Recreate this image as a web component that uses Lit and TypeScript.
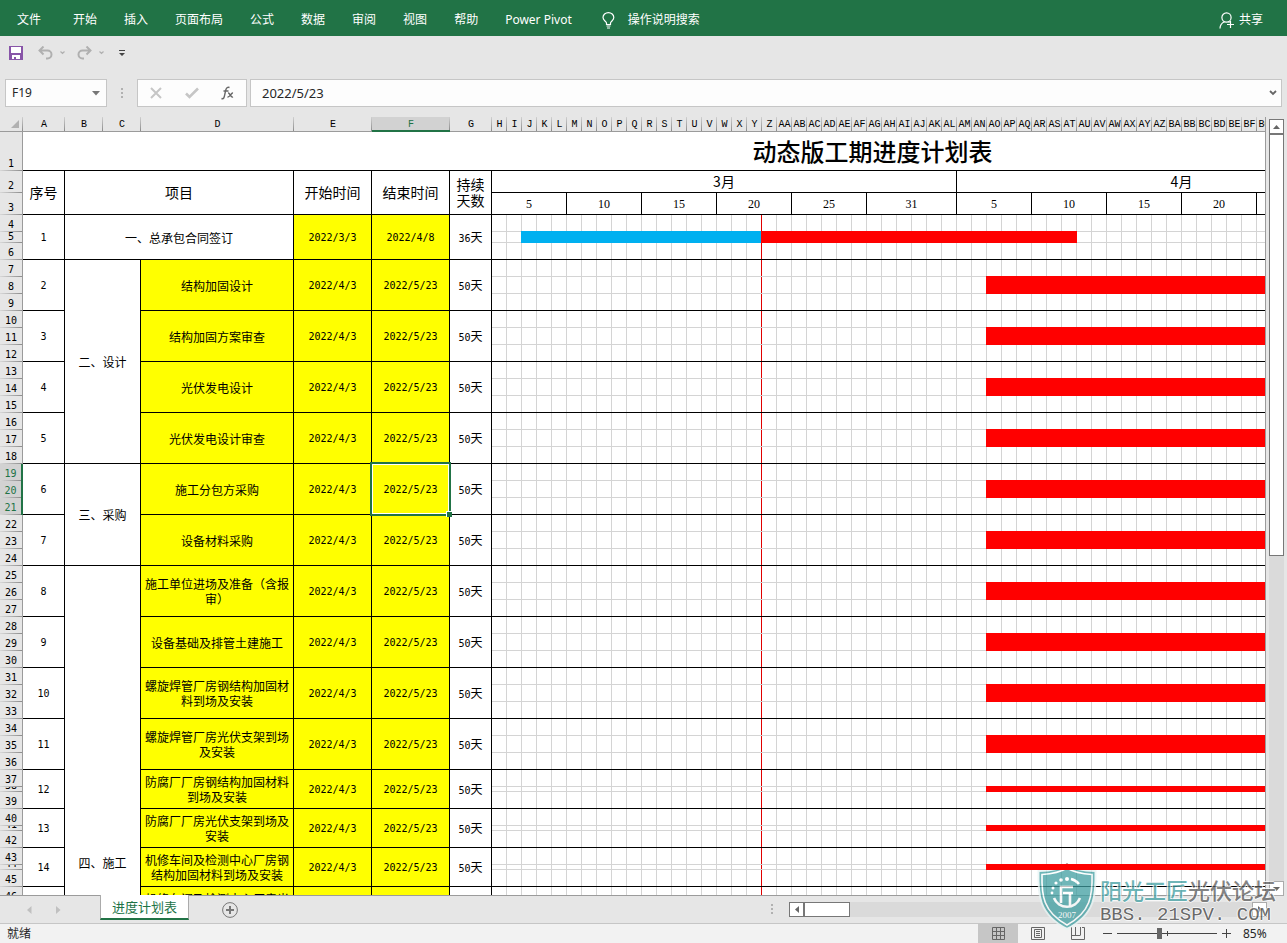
import { LitElement, html, css, svg, nothing } from "lit";
import { customElement } from "lit/decorators.js";
import { classMap } from "lit/directives/class-map.js";

interface Task {
  name: string;
  start: string;
  end: string;
  days: number;
  bars: { from: number; days: number; done?: boolean }[];
}

interface Group {
  title: string;
  tasks: Task[];
}

const DAY = 15;
const FIXED_COLS = [42, 38, 38, 153, 78, 78, 42];
const DAY_COLS = 82;
const TABLE_WIDTH = 23 + FIXED_COLS.reduce((a, b) => a + b, 0) + DAY_COLS * DAY;
const MONTHS = [
  { name: "3月", marks: [[5, 5], [10, 5], [15, 5], [20, 5], [25, 5], [31, 6]] },
  { name: "4月", marks: [[5, 5], [10, 5], [15, 5], [20, 5], [25, 5], [30, 5]] },
  { name: "5月", marks: [[5, 5], [10, 5], [15, 5], [20, 5], [21, 1]] },
];

const spring = (name: string): Task => ({
  name,
  start: "2022/4/3",
  end: "2022/5/23",
  days: 50,
  bars: [{ from: 33, days: 49 }],
});

const FIRST: Task = {
  name: "一、总承包合同签订",
  start: "2022/3/3",
  end: "2022/4/8",
  days: 36,
  bars: [
    { from: 2, days: 16, done: true },
    { from: 18, days: 21 },
  ],
};

const GROUPS: Group[] = [
  {
    title: "二、设计",
    tasks: ["结构加固设计", "结构加固方案审查", "光伏发电设计", "光伏发电设计审查"].map(spring),
  },
  { title: "三、采购", tasks: ["施工分包方采购", "设备材料采购"].map(spring) },
  {
    title: "四、施工",
    tasks: [
      "施工单位进场及准备（含报审）",
      "设备基础及排管土建施工",
      "螺旋焊管厂房钢结构加固材料到场及安装",
      "螺旋焊管厂房光伏支架到场及安装",
      "防腐厂厂房钢结构加固材料到场及安装",
      "防腐厂厂房光伏支架到场及安装",
      "机修车间及检测中心厂房钢结构加固材料到场及安装",
      "机修车间及检测中心厂房光伏支架到场及安装",
      "", "", "", "", "", "",
    ].map(spring),
  },
];

const SELECTED_TASK = 6;

function colName(i: number): string {
  return i < 26
    ? String.fromCharCode(65 + i)
    : String.fromCharCode(64 + Math.floor(i / 26)) + String.fromCharCode(65 + (i % 26));
}

function rowHeights(no: number): number[] {
  if (no === 1) return [17, 11, 17];
  return no < 12 ? [17, 17, 17] : [17, 5, 17];
}

@customElement("excel-sheet")
export class ExcelSheet extends LitElement {
  static styles = css`
    :host {
      display: block;
      overflow: hidden;
      min-width: 0;
      min-height: 0;
      border-right: 1px solid #9b9b9b;
      border-bottom: 1px solid #9b9b9b;
    }
    table {
      table-layout: fixed;
      border-collapse: separate;
      border-spacing: 0;
      background: #fff;
      color: #000;
      font: 12px/15px "Noto Sans CJK SC", sans-serif;
    }
    td,
    th {
      padding: 0;
      box-sizing: border-box;
      font-weight: 400;
      text-align: center;
      vertical-align: middle;
    }
    .col {
      height: 15px;
      border-bottom: 1px solid #9b9b9b;
      padding-top: 2px;
      background: linear-gradient(#d0d0d0, #8c8c8c) right / 1px 100% no-repeat #e6e6e6;
      font: 10px/12px "Liberation Mono", monospace;
      white-space: nowrap;
    }
    .col.picked {
      background-color: #d2d2d2;
      color: #217346;
      border-bottom: 2px solid #217346;
      line-height: 11px;
    }
    .corner {
      vertical-align: bottom;
      padding: 0;
    }
    .corner svg {
      display: block;
      margin-left: 11px;
      margin-bottom: 3px;
    }
    .row {
      background: linear-gradient(to right, #d8d8d8, #8c8c8c) bottom / 100% 1px no-repeat #e6e6e6;
      border-right: 1px solid #9b9b9b;
      vertical-align: top;
    }
    .row.picked {
      background-color: #d2d2d2;
      color: #217346;
      border-right: 2px solid #217346;
    }
    .rowno {
      display: flex;
      align-items: flex-end;
      justify-content: center;
      overflow: hidden;
      font: 10px/11px "DejaVu Sans Mono", monospace;
    }
    .title {
      font-size: 24px;
      line-height: 36px;
      font-weight: 500;
      border-bottom: 1px solid #000;
    }
    .cell {
      border-right: 1px solid #000;
      border-bottom: 1px solid #000;
    }
    .head {
      font-size: 14px;
      line-height: 16px;
      padding-bottom: 2px;
    }
    .mark {
      font: 12px/16px "Liberation Serif", serif;
    }
    .fill {
      background: #ff0;
    }
    .num {
      font: 10px/15px "DejaVu Sans Mono", monospace;
    }
    .lane {
      position: relative;
      background:
        linear-gradient(#e00000, #e00000) 269px 0 / 1px 100% no-repeat,
        repeating-linear-gradient(to right, transparent 0 14px, #d4d4d4 14px 15px);
      border-bottom: 1px solid #d4d4d4;
    }
    .lane.last {
      border-bottom-color: #000;
    }
    .bar {
      position: absolute;
      top: -1px;
      bottom: -1px;
      z-index: 1;
      background: #f00;
    }
    .bar.done {
      background: #00b0f0;
      z-index: 2;
    }
    .selected {
      position: relative;
    }
    .cursor {
      position: absolute;
      inset: -2px;
      z-index: 3;
      border: 2px solid #217346;
      box-shadow: inset 0 0 0 1px #fff;
    }
    .handle {
      position: absolute;
      right: -3px;
      bottom: -3px;
      width: 5px;
      height: 5px;
      background: #217346;
      border: 1px solid #fff;
      border-right: 0;
      border-bottom: 0;
    }
  `;

  private rowHead(n: number, h: number) {
    const picked = n >= 19 && n <= 21;
    return html`<th class=${classMap({ row: true, picked })} scope="row">
      <div class="rowno" style="height:${h - (h > 11 ? 2 : 1)}px">${n}</div>
    </th>`;
  }

  private taskRows(no: number, firstRow: number, task: Task, group?: { title: string; span: number }) {
    const heights = rowHeights(no);
    return heights.map(
      (h, i) => html`<tr style="height:${h}px">
        ${this.rowHead(firstRow + i, h)}
        ${i === 0
          ? html`<td class="cell num" rowspan="3">${no}</td>
              ${no === 1
                ? html`<td class="cell" rowspan="3" colspan="3">${task.name}</td>`
                : html`${group ? html`<td class="cell" rowspan=${group.span} colspan="2">${group.title}</td>` : nothing}
                    <td class="cell fill" rowspan="3">${task.name}</td>`}
              <td class="cell fill num" rowspan="3">${task.start}</td>
              <td class=${classMap({ cell: true, fill: true, num: true, selected: no === SELECTED_TASK })} rowspan="3">
                ${task.end}${no === SELECTED_TASK
                  ? html`<div class="cursor"><div class="handle"></div></div>`
                  : nothing}
              </td>
              <td class="cell" rowspan="3"><span class="num">${task.days}</span>天</td>`
          : nothing}
        <td class=${classMap({ lane: true, last: i === 2 })} colspan=${DAY_COLS}>
          ${i === 1
            ? task.bars.map(
                (b) => html`<div
                  class=${classMap({ bar: true, done: !!b.done })}
                  style="left:${b.from * DAY - 1}px;width:${b.days * DAY + (b.done ? 0 : 1)}px"
                ></div>`
              )
            : nothing}
        </td>
      </tr>`
    );
  }

  private body() {
    let no = 1;
    let row = 4;
    const out = [this.taskRows(no, row, FIRST)];
    for (const g of GROUPS) {
      g.tasks.forEach((t, i) => {
        no += 1;
        row += 3;
        out.push(this.taskRows(no, row, t, i === 0 ? { title: g.title, span: g.tasks.length * 3 } : undefined));
      });
    }
    return out;
  }

  render() {
    const cols = Array.from({ length: 7 + DAY_COLS }, (_, i) => i);
    return html`<table style="width:${TABLE_WIDTH}px">
      <colgroup>
        <col style="width:23px" />
        ${cols.map((i) => html`<col style="width:${i < 7 ? FIXED_COLS[i] : DAY}px" />`)}
      </colgroup>
      <thead>
        <tr>
          <th class="col corner">
            <svg width="8" height="8" viewBox="0 0 8 8"><path d="M8 0V8H0Z" fill="#b1b1b1" /></svg>
          </th>
          ${cols.map((i) => html`<th class=${classMap({ col: true, picked: i === 5 })} scope="col">${colName(i)}</th>`)}
        </tr>
      </thead>
      <tbody>
        <tr style="height:39px">
          ${this.rowHead(1, 39)}
          <td class="title" colspan=${7 + DAY_COLS}>动态版工期进度计划表</td>
        </tr>
        <tr style="height:22px">
          ${this.rowHead(2, 22)}
          <td class="cell head" rowspan="2">序号</td>
          <td class="cell head" rowspan="2" colspan="3">项目</td>
          <td class="cell head" rowspan="2">开始时间</td>
          <td class="cell head" rowspan="2">结束时间</td>
          <td class="cell head" rowspan="2">持续<br />天数</td>
          ${MONTHS.map(
            (m) => html`<td class="cell head" colspan=${m.marks.reduce((a, k) => a + k[1], 0)}>${m.name}</td>`
          )}
        </tr>
        <tr style="height:22px">
          ${this.rowHead(3, 22)}
          ${MONTHS.map((m) => m.marks.map(([d, span]) => html`<td class="cell mark" colspan=${span}>${d}</td>`))}
        </tr>
        ${this.body()}
      </tbody>
    </table>`;
  }
}

const TABS = ["开始", "插入", "页面布局", "公式", "数据", "审阅", "视图", "帮助", "Power Pivot"];

const chevron = svg`<path d="M0.5 0.5L2.5 2.5L4.5 0.5" fill="none" stroke="#b0b0b0" stroke-width="1.2"/>`;

@customElement("app-root")
export class AppRoot extends LitElement {
  static styles = css`
    :host {
      display: flex;
      flex-direction: column;
      position: relative;
      height: 100vh;
      overflow: hidden;
      background: #e6e6e6;
      color: #262626;
      font: 12px/16px "Noto Sans", "Noto Sans CJK SC", sans-serif;
    }
    button,
    input {
      margin: 0;
      padding: 0;
      border: 0;
      background: none;
      color: inherit;
      font: inherit;
      outline: 0;
    }
    svg {
      display: block;
      flex: none;
    }
    .ribbon {
      display: flex;
      align-items: center;
      box-sizing: border-box;
      height: 36px;
      padding: 4px 24px 0 17px;
      background: #217346;
      color: #fff;
      white-space: nowrap;
    }
    .tabs {
      display: flex;
      gap: 27px;
      margin-left: 32px;
    }
    .tell {
      display: flex;
      align-items: center;
      gap: 13px;
      margin-left: 30px;
    }
    .share {
      display: flex;
      align-items: center;
      gap: 4px;
      margin-left: auto;
    }
    .quick {
      display: flex;
      align-items: center;
      height: 34px;
      padding-left: 9px;
    }
    .quick button {
      display: flex;
      align-items: center;
      gap: 7px;
    }
    .save {
      margin-right: 14px;
    }
    .undo {
      margin-right: 12px;
    }
    .redo {
      margin-right: 15px;
    }
    .formula {
      display: flex;
      align-items: center;
      height: 28px;
      padding: 9px 5px 10px;
    }
    .box {
      display: flex;
      align-items: center;
      box-sizing: border-box;
      height: 28px;
      border: 1px solid #c6c6c6;
      background: #fdfdfd;
    }
    .namebox {
      width: 102px;
      padding: 0 6px;
    }
    .namebox input {
      flex: 1;
      min-width: 0;
    }
    .grip {
      margin: 0 13px 0 14px;
    }
    .tools {
      width: 110px;
      padding: 0 12px;
      justify-content: space-between;
      margin-right: 3px;
    }
    .entry {
      flex: 1;
      padding: 0 4px 0 11px;
    }
    .entry input {
      flex: 1;
      min-width: 0;
      font-size: 13px;
    }
    .work {
      display: flex;
      flex: 1;
      min-height: 0;
    }
    excel-sheet {
      flex: 1;
    }
    .vscroll {
      display: flex;
      flex-direction: column;
      width: 15px;
      margin: 2px 3px 0;
      background: #dadada;
    }
    .arrow {
      display: flex;
      align-items: center;
      justify-content: center;
      box-sizing: border-box;
      flex: none;
      width: 15px;
      height: 15px;
      border: 1px solid #777;
      background: #fff;
    }
    .vthumb {
      box-sizing: border-box;
      flex: 0 0 auto;
      height: 54.5%;
      border: 1px solid #777;
      border-top-width: 2px;
      margin-top: -1px;
      background: #fff;
    }
    .down {
      margin-top: auto;
      border-color: #ababab;
    }
    .sheets {
      display: flex;
      align-items: center;
      box-sizing: border-box;
      height: 28px;
      padding-right: 20px;
      border-bottom: 1px solid #c6c6c6;
    }
    .nav {
      display: flex;
      gap: 24px;
      margin-left: 27px;
      width: 73px;
    }
    .sheet-tab {
      align-self: flex-start;
      box-sizing: border-box;
      position: relative;
      width: 89px;
      height: 25px;
      margin-top: -1px;
      border: 1px solid #ababab;
      border-top: 0;
      border-bottom: 2px solid #217346;
      background: #fff;
      color: #217346;
      font-size: 13px;
    }
    .add {
      margin-left: 33px;
    }
    .grip-end {
      margin-left: auto;
    }
    .hscroll {
      display: flex;
      width: 478px;
      margin-left: 15px;
      background: #dadada;
    }
    .hthumb {
      box-sizing: border-box;
      width: 46px;
      border: 1px solid #777;
      background: #fff;
    }
    .right {
      margin-left: auto;
      border-color: #ababab;
    }
    .status {
      display: flex;
      align-items: center;
      height: 19px;
      padding: 0 19px 0 7px;
      background: #f2f2f2;
    }
    .views {
      display: flex;
      align-self: stretch;
      margin-left: auto;
    }
    .views button {
      display: flex;
      align-items: center;
      justify-content: center;
      width: 40px;
    }
    .views .on {
      background: #c6c6c6;
    }
    .zoom {
      display: flex;
      align-items: center;
      gap: 5px;
      margin-left: 5px;
    }
    .zoom input {
      appearance: none;
      width: 100px;
      height: 13px;
      background:
        linear-gradient(#444, #444) 50px 50% / 1px 5px no-repeat,
        linear-gradient(#444, #444) 0 50% / 100% 1px no-repeat;
    }
    .zoom input::-webkit-slider-thumb {
      appearance: none;
      width: 5px;
      height: 11px;
      background: #666;
    }
    .percent {
      margin-left: 7px;
      width: 25px;
    }
    .mark {
      position: absolute;
      right: 11px;
      bottom: 12px;
      display: flex;
      align-items: flex-start;
      gap: 3px;
      pointer-events: none;
      opacity: 0.75;
    }
    .brand {
      padding-top: 10px;
      white-space: nowrap;
      text-shadow: 1px 0 #fff, -1px 0 #fff, 0 1px #fff, 0 -1px #fff;
    }
    .brand-name {
      color: #5a5a5a;
      font: 500 22px/34px "Noto Sans CJK SC", sans-serif;
    }
    .brand-name b {
      color: #3f9ea1;
      font-weight: 500;
    }
    .brand-site {
      color: #444;
      font: 19px/18px "Liberation Mono", monospace;
    }
  `;

  private grip(cls: string) {
    return html`<svg class=${cls} width="3" height="11" viewBox="0 0 3 11">
      <path d="M0 0h2v2H0zM0 4h2v2H0zM0 8h2v2H0z" fill="#b1b1b1" />
    </svg>`;
  }

  render() {
    return html`
      <nav class="ribbon">
        <button>文件</button>
        <div class="tabs">${TABS.map((t) => html`<button>${t}</button>`)}</div>
        <button class="tell">
          <svg width="13" height="17" viewBox="0 0 13 17" fill="none" stroke="#fff" stroke-width="1.2">
            <path d="M4.500 12.500V11C4.500 9.500 1 8.500 1 5.600a5.400 5 0 0 1 10.800 0C11.800 8.500 8.500 9.500 8.500 11v1.500zM4.500 14h4M5 16h3" />
          </svg>
          <span>操作说明搜索</span>
        </button>
        <button class="share">
          <svg width="16" height="17" viewBox="0 0 16 17" fill="none" stroke="#fff" stroke-width="1.2">
            <circle cx="7.500" cy="5.500" r="4.600" />
            <path d="M1 16.500C1 13 2.800 11 5.500 9.800M9.500 9.800l1 .6M8 12.500h7M11.500 9v7" />
          </svg>
          <span>共享</span>
        </button>
      </nav>

      <div class="quick">
        <button class="save" aria-label="保存">
          <svg width="15" height="15" viewBox="0 0 15 15">
            <path d="M0 0h14v14H0z" fill="#8855a8" />
            <path d="M2 1h10v6H2zM3 9h8v4H3z" fill="#fff" />
            <path d="M5 11h2v2H5z" fill="#8855a8" />
          </svg>
        </button>
        <button class="undo" aria-label="撤消">
          <svg width="15" height="14" viewBox="0 0 15 14" fill="none" stroke="#b0b0b0" stroke-width="2">
            <path d="M5.500 0.500L1.500 4.500l4 4M2 4.500h7.500a4 4 0 0 1 0 8H8" />
          </svg>
          <svg width="5" height="4" viewBox="0 0 5 4">${chevron}</svg>
        </button>
        <button class="redo" aria-label="恢复">
          <svg width="15" height="14" viewBox="0 0 15 14" fill="none" stroke="#b0b0b0" stroke-width="2">
            <path d="M9.500 0.500l4 4l-4 4M13 4.500H5.500a4 4 0 0 0 0 8H7" />
          </svg>
          <svg width="5" height="4" viewBox="0 0 5 4">${chevron}</svg>
        </button>
        <button aria-label="自定义快速访问工具栏">
          <svg width="6" height="7" viewBox="0 0 6 7"><path d="M0 0h6v1H0zM0 3h6L3 6z" fill="#444" /></svg>
        </button>
      </div>

      <div class="formula">
        <div class="box namebox">
          <input aria-label="名称框" .value=${"F19"} />
          <svg width="8" height="5" viewBox="0 0 8 5"><path d="M0 0h8L4 4.500z" fill="#777" /></svg>
        </div>
        ${this.grip("grip")}
        <div class="box tools">
          <button aria-label="取消">
            <svg width="12" height="12" viewBox="0 0 12 12" stroke="#c6c6c6" stroke-width="2">
              <path d="M1 1l10 10M11 1L1 11" />
            </svg>
          </button>
          <button aria-label="输入">
            <svg width="14" height="12" viewBox="0 0 14 12" fill="none" stroke="#c6c6c6" stroke-width="2.600">
              <path d="M1 6.500L4.500 10L13 1.500" />
            </svg>
          </button>
          <button aria-label="插入函数">
            <svg width="13" height="14" viewBox="0 0 13 14" fill="none" stroke="#666" stroke-width="1.400">
              <path d="M0.500 12.500C3 13.500 3.300 11 4 7.500S5 0.500 8.500 1.500M2.500 5h5M7 7c2-.5 2.500 5 5 4M12 7c-2-.5-3 4.500-5.500 4" />
            </svg>
          </button>
        </div>
        <div class="box entry">
          <input aria-label="编辑栏" .value=${"2022/5/23"} />
          <svg width="8" height="6" viewBox="0 0 8 6" fill="none" stroke="#666" stroke-width="1.800">
            <path d="M1 1l3 3l3-3" />
          </svg>
        </div>
      </div>

      <main class="work">
        <excel-sheet></excel-sheet>
        <div class="vscroll">
          <button class="arrow" aria-label="向上滚动">
            <svg width="7" height="4" viewBox="0 0 7 4"><path d="M0 4h7L3.500 0z" fill="#666" /></svg>
          </button>
          <div class="vthumb"></div>
          <button class="arrow down" aria-label="向下滚动">
            <svg width="7" height="4" viewBox="0 0 7 4"><path d="M0 0h7L3.500 4z" fill="#666" /></svg>
          </button>
        </div>
      </main>

      <div class="sheets">
        <div class="nav">
          <svg width="5" height="8" viewBox="0 0 5 8"><path d="M4.500 0v8L0 4z" fill="#c0c0c0" /></svg>
          <svg width="5" height="8" viewBox="0 0 5 8"><path d="M0 0v8l4.500-4z" fill="#c0c0c0" /></svg>
        </div>
        <button class="sheet-tab">进度计划表</button>
        <button class="add" aria-label="新工作表">
          <svg width="16" height="16" viewBox="0 0 16 16" fill="none" stroke="#777">
            <circle cx="8" cy="8" r="7.400" />
            <path d="M4 8h8M8 4v8" stroke-width="2" />
          </svg>
        </button>
        ${this.grip("grip-end")}
        <div class="hscroll">
          <button class="arrow" aria-label="向左滚动">
            <svg width="4" height="7" viewBox="0 0 4 7"><path d="M4 0v7L0 3.500z" fill="#666" /></svg>
          </button>
          <div class="hthumb"></div>
          <button class="arrow right" aria-label="向右滚动">
            <svg width="4" height="7" viewBox="0 0 4 7"><path d="M0 0v7l4-3.500z" fill="#666" /></svg>
          </button>
        </div>
      </div>

      <footer class="status">
        <span>就绪</span>
        <div class="views">
          <button class="on" aria-label="普通">
            <svg width="13" height="13" viewBox="0 0 13 13" fill="none" stroke="#666">
              <path d="M.5.5h12v12H.5zM.5 4.500h12M.5 8.500h12M4.500.5v12M8.500.5v12" />
            </svg>
          </button>
          <button aria-label="页面布局">
            <svg width="14" height="13" viewBox="0 0 14 13" fill="none" stroke="#666">
              <path d="M.5.5h13v12H.5zM3.500 2.500h7v8h-7zM5 4.500h4M5 6.500h4M5 8.500h4" />
            </svg>
          </button>
          <button aria-label="分页预览">
            <svg width="14" height="13" viewBox="0 0 14 13" fill="none" stroke="#666">
              <path d="M.5 0v12.500h13V.5H11M.5 8.500h9M4.500 0v8M9.500 0v8" />
            </svg>
          </button>
        </div>
        <div class="zoom">
          <svg width="9" height="9" viewBox="0 0 9 9"><path d="M0 4h9v1H0z" fill="#444" /></svg>
          <input type="range" aria-label="缩放" min="0" max="100" .value=${"42"} />
          <svg width="9" height="9" viewBox="0 0 9 9"><path d="M0 4h9v1H0zM4 0h1v9H4z" fill="#444" /></svg>
          <span class="percent">85%</span>
        </div>
      </footer>

      <div class="mark">
        <svg width="60" height="69" viewBox="0 0 60 69">
          <path
            d="M30 2C24 7 12 9 1.500 9C1 32 1 52 30 67C59 52 59 32 58.500 9C48 9 36 7 30 2Z"
            fill="#3f9ea1" stroke="#e8f4f4" stroke-width="2"
          />
          <path
            d="M30 6C23 10.500 14 12 5 12.500C4.500 33 6 50 30 63C54 50 55.500 33 55 12.500C46 12 37 10.500 30 6Z"
            fill="none" stroke="#fff" stroke-width="1.600"
          />
          <path d="M18 7C24 6 28 3 30 1C32 3 36 6 42 7L30 4.500Z" fill="#8c3a3a" />
          <path
            d="M42 22A14.500 14.500 0 0 0 34 17M17 36A14 14 0 0 0 43 36M36 25H24V41M26 31H36M33 31V45"
            fill="none" stroke="#fff" stroke-width="2.600"
          />
          <g fill="#fff">
            <circle cx="30" cy="17" r="2" /><circle cx="24" cy="18" r="1.800" /><circle cx="19" cy="21" r="1.600" />
            <circle cx="16" cy="26" r="1.500" /><circle cx="15" cy="31" r="1.400" />
          </g>
          <text x="30" y="56" text-anchor="middle" fill="#fff" font-family="Liberation Serif, serif" font-size="9">2007</text>
        </svg>
        <div class="brand">
          <div class="brand-name"><b>阳光工匠</b>光伏论坛</div>
          <div class="brand-site">BBS. 21SPV. COM</div>
        </div>
      </div>
    `;
  }
}
